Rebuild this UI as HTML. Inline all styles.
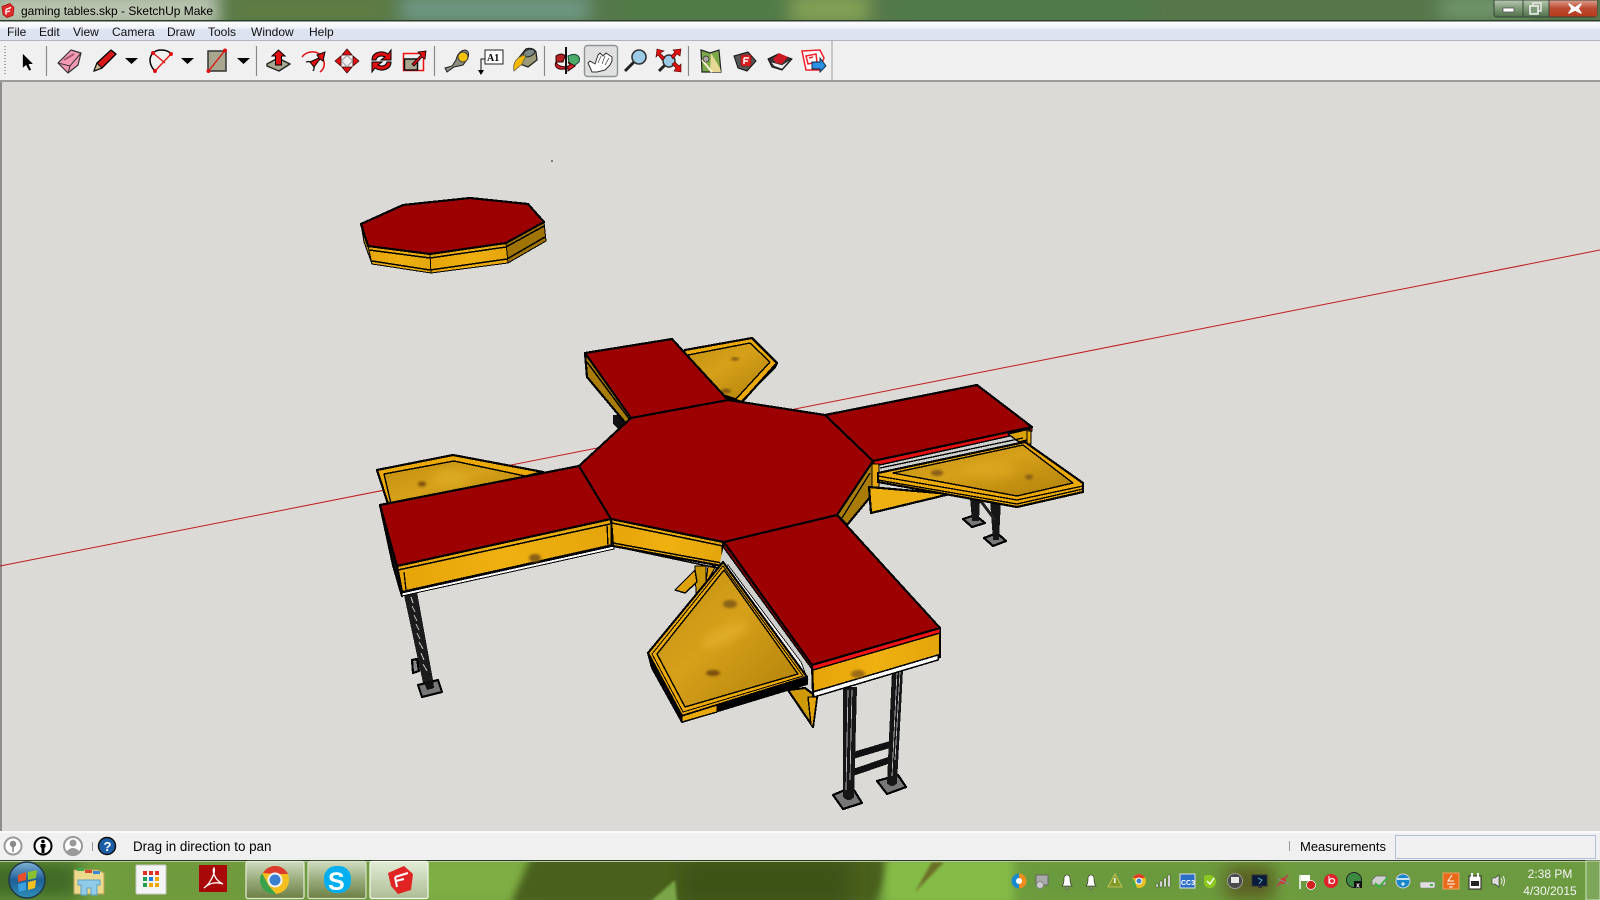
<!DOCTYPE html>
<html><head><meta charset="utf-8"><title>gaming tables.skp - SketchUp Make</title>
<style>
html,body{margin:0;padding:0;width:1600px;height:900px;overflow:hidden;background:#dbdad6}
svg{display:block;position:absolute;left:0;top:0}
text{font-family:"Liberation Sans",sans-serif;fill:#000}
.k{stroke:#000;stroke-width:2.200;stroke-linejoin:round;stroke-linecap:round}
.t{stroke:#000;stroke-width:1.400;stroke-linejoin:round}
.o{stroke:#000;stroke-width:1;stroke-linejoin:round}
.red{fill:#9c0000}
.m text{font-size:12px;fill:#111}
</style></head><body>
<svg width="1600" height="900" viewBox="0 0 1600 900" xmlns="http://www.w3.org/2000/svg">
<defs>
<filter id="b4" x="-50%" y="-50%" width="200%" height="200%"><feGaussianBlur stdDeviation="4"/></filter>
<filter id="b9" x="-50%" y="-100%" width="200%" height="300%"><feGaussianBlur stdDeviation="9"/></filter>
<filter id="b1" x="-50%" y="-50%" width="200%" height="200%"><feGaussianBlur stdDeviation="1.200"/></filter>
<linearGradient id="menu" x1="0" y1="0" x2="0" y2="1"><stop offset="0" stop-color="#fbfcfe"/><stop offset=".32" stop-color="#f3f5fb"/><stop offset=".42" stop-color="#dfe4f2"/><stop offset="1" stop-color="#dde2f1"/></linearGradient>
<linearGradient id="face" x1="0" y1="0" x2="1" y2="0"><stop offset="0" stop-color="#e6a408"/><stop offset=".5" stop-color="#efb010"/><stop offset="1" stop-color="#e3a50a"/></linearGradient>
<linearGradient id="ply" x1="0" y1="0" x2="1" y2="1"><stop offset="0" stop-color="#c08e0e"/><stop offset=".45" stop-color="#d6a01a"/><stop offset="1" stop-color="#b08008"/></linearGradient>
<linearGradient id="btn" x1="0" y1="0" x2="0" y2="1"><stop offset="0" stop-color="#cfdcc0"/><stop offset=".5" stop-color="#9aab7c"/><stop offset="1" stop-color="#6c7f44"/></linearGradient>
<linearGradient id="btn2" x1="0" y1="0" x2="0" y2="1"><stop offset="0" stop-color="#e2ecd6"/><stop offset="1" stop-color="#aebd94"/></linearGradient>
<linearGradient id="close" x1="0" y1="0" x2="0" y2="1"><stop offset="0" stop-color="#d99a8a"/><stop offset=".5" stop-color="#bb4a30"/><stop offset="1" stop-color="#b83a1c"/></linearGradient>
<linearGradient id="winb" x1="0" y1="0" x2="0" y2="1"><stop offset="0" stop-color="#b9c9b0"/><stop offset=".5" stop-color="#7f9a78"/><stop offset="1" stop-color="#4f7048"/></linearGradient>
<linearGradient id="orb" x1="0" y1="0" x2="0" y2="1"><stop offset="0" stop-color="#7fb4d8"/><stop offset=".5" stop-color="#1f5f96"/><stop offset="1" stop-color="#2d8fb8"/></linearGradient>
<clipPath id="title"><rect width="1600" height="20"/></clipPath>
<clipPath id="task"><rect y="860" width="1600" height="40"/></clipPath>
</defs>

<!-- viewport -->
<rect width="1600" height="900" fill="#dbdad6"/>
<rect x="0" y="82" width="2" height="750" fill="#8d8d8d"/>

<!-- title bar -->
<g clip-path="url(#title)">
<rect width="1600" height="20" fill="#56774a"/>
<rect x="-10" y="-10" width="230" height="40" fill="#b9c4b0" filter="url(#b9)"/>
<rect x="230" y="-6" width="160" height="30" fill="#5f7d42" filter="url(#b9)"/>
<rect x="400" y="-4" width="190" height="26" fill="#6f9a88" filter="url(#b9)"/>
<rect x="620" y="-6" width="170" height="30" fill="#4f7c46" filter="url(#b9)"/>
<rect x="790" y="-6" width="80" height="30" fill="#84a255" filter="url(#b9)"/>
<rect x="890" y="-6" width="260" height="30" fill="#4f7c4a" filter="url(#b9)"/>
<rect x="1440" y="0" width="90" height="16" fill="#7da27c" filter="url(#b9)"/>
</g>
<rect y="20" width="1600" height="1.500" fill="#2d3d2a"/>
<!-- app icon -->
<g transform="translate(8,10.500)"><path d="M-6-4L2-7L6-3L5 5L-1 7L-5 4Z" fill="#e02a2a" stroke="#a81414" stroke-width=".8"/><path d="M-2-1L3-3M-2-1V4M-2 1.500L2 .5" stroke="#fff" stroke-width="1.400" fill="none"/></g>
<text x="21" y="15" font-size="12">gaming tables.skp - SketchUp Make</text>
<!-- window buttons -->
<g>
<path d="M1494 0H1597V14Q1597 17 1594 17H1497Q1494 17 1494 14Z" fill="url(#winb)" stroke="#39463a" stroke-width="1"/>
<rect x="1549" y=".5" width="48" height="16" fill="url(#close)"/>
<path d="M1523 0V17M1549 0V17" stroke="#39463a"/>
<rect x="1503" y="8" width="11" height="4" fill="#fff" stroke="#444" stroke-width=".7"/>
<rect x="1533" y="3" width="8" height="8" fill="none" stroke="#e8e8e8" stroke-width="1.500"/>
<rect x="1530" y="6" width="8" height="8" fill="#7f9a78" stroke="#f4f4f4" stroke-width="1.500"/>
<path d="M1569 4L1575 8L1581 4L1578 8.500L1581 13L1575 10L1569 13L1572 8.500Z" fill="#fff" stroke="#fff" stroke-width="1.500" stroke-linejoin="round"/>
</g>

<!-- menu bar -->
<rect y="21.500" width="1600" height="19" fill="url(#menu)"/>
<rect y="40" width="1600" height="1" fill="#b2b4bd"/>
<g class="m">
<text x="7" y="36">File</text><text x="39" y="36">Edit</text><text x="73" y="36">View</text>
<text x="112" y="36">Camera</text><text x="167" y="36">Draw</text><text x="208" y="36">Tools</text>
<text x="251" y="36">Window</text><text x="309" y="36">Help</text>
</g>

<!-- toolbar -->
<rect y="41" width="1600" height="39" fill="#f0f0f0"/>
<rect y="80" width="1600" height="2" fill="#9a9a9a"/>
<path d="M832 41V80" stroke="#aaaaaa" stroke-width="1.200"/>
<path d="M5 46V76" stroke="#a8a8a8" stroke-dasharray="1 2" stroke-width="2"/>
<path d="M46.500 46V76M256.500 46V76M434.500 46V76M544.500 46V76M688.500 46V76" stroke="#8a8a8a" stroke-width="1.200"/>

<!-- select -->
<path d="M22.500 53V68.500L26 65.500L29 71L31.500 70L29 64.500L33.500 64Z" fill="#000" stroke="#fff" stroke-width=".6"/>
<!-- eraser -->
<path d="M58 63L71 50L81 53L78 65L68 73Z" fill="#f49ab4" stroke="#333" stroke-width="1.200" stroke-linejoin="round"/>
<path d="M58 63L70 66L81 53M70 66L68 73" stroke="#333" fill="none"/>
<path d="M64 60L74 54" stroke="#a85a70" stroke-width="2"/>
<!-- pencil -->
<path d="M94 71L97 63L111 50L116 54L102 68Z" fill="#d81818" stroke="#000" stroke-width="1.300" stroke-linejoin="round"/>
<path d="M94 71L97 63L102 68Z" fill="#c8b48a" stroke="#000"/>
<!-- dropdowns -->
<path d="M125 58H138L131.500 64Z M181 58H194L187.500 64Z M237 58H250L243.500 64Z"/>
<!-- arc -->
<path d="M155 71C146 62 150 50 161 50C165 50 169 51 171 54" fill="none" stroke="#000" stroke-width="1.500"/>
<path d="M155 71L171 54M153 53L165 63" stroke="#e01010" stroke-width="1.300"/>
<circle cx="153" cy="53" r="2" fill="#e01010"/><circle cx="171" cy="54" r="2" fill="#e01010"/><circle cx="155" cy="71" r="2" fill="#e01010"/>
<!-- rect -->
<rect x="208" y="51" width="18" height="20" fill="#a9a68f" stroke="#333" stroke-width="1.500"/>
<path d="M208.500 71L225 50.500" stroke="#e01010" stroke-width="1.300"/>
<circle cx="208.500" cy="71" r="2" fill="#e01010"/><circle cx="225" cy="50.500" r="2" fill="#e01010"/>
<!-- push pull -->
<path d="M267 64L278 58L290 64L279 71L267 66Z" fill="#a9a68f" stroke="#222" stroke-width="1.400" stroke-linejoin="round"/>
<path d="M275.500 65V56H272L278.500 50L285 56H281.500V65Z" fill="#e01010" stroke="#000" stroke-width="1"/>
<!-- follow me -->
<path d="M302 57C308 49 322 50 324 62C325 66 323 70 320 72" fill="none" stroke="#e01010" stroke-width="1.500"/>
<path d="M306 62C312 60 316 66 313 71" fill="none" stroke="#222" stroke-width="1.400"/>
<path d="M310 62L319 58L317 55L325 52L323 61L320 59L314 67Z" fill="#e01010" stroke="#000" stroke-width="1"/>
<!-- move -->
<g fill="#e01010" stroke="#300" stroke-width=".8"><path d="M347 49L352 55H342Z"/><path d="M347 73L352 67H342Z"/><path d="M335 61L341 56V66Z"/><path d="M359 61L353 56V66Z"/></g>
<rect x="343" y="57" width="8" height="8" fill="#eee" stroke="#999" transform="rotate(45 347 61)"/>
<!-- rotate -->
<path d="M372 60C372 52 382 50 388 54L391 50V60H381L385 57C381 55 377 56 376 60Z" fill="#e01010" stroke="#000"/>
<path d="M391 62C391 70 381 72 375 68L372 72V62H382L378 65C382 67 386 66 387 62Z" fill="#e01010" stroke="#000"/>
<!-- scale -->
<rect x="403.500" y="53.500" width="20" height="17" fill="none" stroke="#f01010" stroke-width="1.500"/>
<rect x="404.500" y="59" width="13" height="11" fill="#a9a68f" stroke="#111" stroke-width="1.500"/>
<path d="M412 64L421 55L418 52L426 51L425 59L422 57L414 66Z" fill="#e01010" stroke="#000" stroke-width=".8"/>
<!-- tape -->
<path d="M445 68L452 66L456 60Q458 51 465 50Q470 51 468 58L463 65L454 67L447 72Z" fill="#8c8c80" stroke="#222"/>
<circle cx="463" cy="57" r="5" fill="#f2c200" stroke="#444"/>
<!-- text tool -->
<rect x="485" y="50" width="18" height="14" fill="#fff" stroke="#222"/>
<text x="487" y="61" font-size="10" font-weight="700" style="font-family:'Liberation Serif',serif">A1</text>
<path d="M485 59H481V72" fill="none" stroke="#111"/><path d="M478 70H484L481 75Z"/>
<!-- paint -->
<path d="M517 60L526 49Q533 47 536 52L537 60L528 67L520 64Z" fill="#9a9a78" stroke="#222" stroke-width="1.300"/>
<ellipse cx="529" cy="53" rx="6" ry="3.500" fill="#7c8b88" stroke="#222" transform="rotate(-20 529 53)"/>
<path d="M514 71C512 62 518 56 526 55L522 64Z" fill="#f4b800" stroke="#664" stroke-width=".8"/>
<!-- orbit -->
<path d="M568 56C576 52 581 56 579 62L574 66L569 63Z" fill="#4dab6a" stroke="#143" stroke-width="1"/>
<path d="M556 56C560 53 564 54 565 56L563 62L556 62Z" fill="#b52020" stroke="#300"/>
<path d="M556 62C558 67 566 68 570 65L568 62L575 66L568 71V68C560 71 553 68 556 62Z" fill="#d8202a" stroke="#300" stroke-width="1"/>
<path d="M566 47V74" stroke="#111" stroke-width="2"/>
<!-- pan box -->
<rect x="584.500" y="45.500" width="33" height="31" rx="3" fill="#e0e0e0" stroke="#8e9396" stroke-width="1.400"/>
<path d="M592 72L588 63L590 61L595 64L598 55L600 53L603 56L606 53L609 55L612 57L612 61L610 65L605 70L597 72Z" fill="#fff" stroke="#333" stroke-width="1" stroke-linejoin="round"/>
<path d="M601 56L598 63M605 56L602 64M609 58L605 65" stroke="#555" stroke-width=".8"/>
<!-- magnifier -->
<path d="M625 71L634 62" stroke="#222" stroke-width="3"/>
<circle cx="639" cy="57" r="7" fill="#9ccbe8" stroke="#333" stroke-width="1.600"/>
<!-- extents -->
<path d="M659 71L666 64" stroke="#222" stroke-width="3"/>
<circle cx="669" cy="61" r="6" fill="#9ccbe8" stroke="#333" stroke-width="1.500"/>
<g fill="#e01010" stroke="#400" stroke-width=".6"><path d="M657 49L664 51L660 53L665 58L662 60L658 55L656 57Z"/><path d="M681 49L680 56L677 54L673 59L671 56L675 52L673 50Z"/><path d="M681 72L674 71L676 68L672 64L675 62L679 66L681 64Z"/></g>
<!-- map -->
<path d="M701 50L710 53L719 50L721 72L712 72L702 72Z" fill="#7ca84a" stroke="#222" stroke-width="1.200"/>
<path d="M711 53L720 68L721 72L710 72Z" fill="#e6d894"/><path d="M702 60L712 72" stroke="#f4f0d0" stroke-width="2"/>
<circle cx="706" cy="59" r="3" fill="#a8a8a0" stroke="#333" stroke-width=".8"/>
<!-- warehouse -->
<path d="M734 56L748 52L756 61L747 71L738 68Z" fill="#555" stroke="#111"/>
<path d="M741 55L751 55L751 66L741 66Z" fill="#d82020" stroke="#801010" stroke-width=".6"/>
<path d="M744 58H749M744 58V64M744 61H748" stroke="#fff" stroke-width="1.400" fill="none"/>
<!-- extension -->
<path d="M768 59L778 54L792 59L782 70L772 67Z" fill="#333" stroke="#111"/>
<path d="M771 62L782 65L790 60L782 69L774 66Z" fill="#eee" stroke="#333" stroke-width=".5"/>
<path d="M773 59L779 53L788 57L782 64L776 63Z" fill="#cc1822"/>
<!-- share -->
<path d="M802 51L820 50L824 58L819 70L806 70Z" fill="#fff" stroke="#f0202a" stroke-width="1.500"/>
<path d="M806 56L816 54L817 62L808 64ZM809 58L813 57" fill="none" stroke="#f0202a" stroke-width="1.500"/>
<path d="M812 62H820V58L826 66L820 72V69H812Z" fill="#2a90e8" stroke="#123" stroke-width=".9"/>

<!-- axis -->
<path d="M0 566L1600 250" stroke="#c21a1f" stroke-width="1"/>
<circle cx="552" cy="161" r=".8" fill="#111"/>

<g shape-rendering="crispEdges">
<!-- floating octagon -->
<g>
<path d="M361 224L372 264L429 273L508 263L546 241L544 222Z" fill="#000"/>
<path d="M368 246L430 254L431 273L372 264Z" fill="url(#face)" class="o"/>
<path d="M430 254L506 243L508 263L431 273Z" fill="url(#face)" class="o"/>
<path d="M506 243L544 222L546 241L508 263Z" fill="#a07404" class="o"/>
<path d="M361 224L368 246L372 264L364 242Z" fill="#b88806" class="o"/>
<path d="M369 250L430 258L506 247L544 226M372 261L430 270L507 259L545 237" fill="none" stroke="#000" stroke-width="1.500"/>
<path d="M361 224L403 205L470 198L528 204L544 222L506 243L430 254L368 246Z" class="red k"/>
</g>

<!-- left leg -->
<g>
<path d="M412 660L417 659L419 671L413 673Z" fill="#888" class="k"/>
<path d="M404 595L417 592L433 680L423 683Z" fill="#1c1c1c"/>
<path d="M411 597L413 603M412 606L415 612M414 615L417 621M416 624L419 630M417 633L420 639M419 642L423 649M421 653L424 660M423 664L427 671" stroke="#c8c8c8" stroke-width="1"/>
<path d="M418 685L438 680L442 692L422 697Z" fill="#777" class="k"/>
<path d="M424 682L433 680L434 688L427 690Z" fill="#111"/>
</g>

<!-- front legs -->
<g>
<path d="M877 781L898 775L906 787L887 794Z" fill="#777" class="k"/>
<path d="M833 795L852 787L862 803L843 809Z" fill="#777" class="k"/>
<path d="M853 752L890 741V748L853 759ZM853 769L888 757V764L853 776Z" fill="#111"/>
<path d="M843 687L857 687L854 797Q849 803 843 797Z" fill="#161616"/>
<path d="M892 670L903 670L897 783Q892 789 887 783Z" fill="#161616"/>
<path d="M848 690L846 790M852 690L850 780M897 672L892 776M900 672L895 760" stroke="#bbb" stroke-width=".8"/>
</g>

<!-- right legs -->
<g>
<path d="M963 519L975 515L985 523L972 527Z" fill="#777" class="k"/>
<path d="M984 538L997 533L1006 541L993 546Z" fill="#777" class="k"/>
<path d="M970 498H980L979 521H972Z" fill="#161616"/>
<path d="M990 500H1001L999 540H993Z" fill="#161616"/>
<path d="M980 500L995 520" stroke="#222" stroke-width="3"/>
</g>

<!-- center support post -->
<path d="M695 566H706V593H696Z" fill="#c99808" class="o"/>
<path d="M695 570L675 590L685 593L697 582Z" fill="#dea30a" class="t"/>
<path d="M708 566H716L706 583Z" fill="#d89f08" class="o"/>

<!-- left shelf -->
<path d="M377 470L453 455L543 472L390 510Z" fill="#eca90a" class="k"/>
<path d="M384 474L454 461L525 476L392 508Z" fill="url(#ply)" class="t"/>
<path d="M377 470L390 510" stroke="#000" stroke-width="2"/>
<ellipse cx="450" cy="478" rx="18" ry="9" fill="#e0ae28" opacity=".7" filter="url(#b4)"/>
<ellipse cx="422" cy="484" rx="4" ry="2.500" fill="#7c5010" filter="url(#b1)"/>
<!-- top shelf -->
<path d="M685 350L752 338L777 363L742 402L670 380Z" fill="#eca90a" class="k"/>
<path d="M688 355L750 343L770 362L736 399L680 380Z" fill="url(#ply)" class="t"/>
<path d="M777 364L742 402L739 404L775 368Z" fill="#b88806" class="t"/>
<ellipse cx="735" cy="359" rx="4" ry="1.500" fill="#7c5010" filter="url(#b1)"/>
<ellipse cx="726" cy="391" rx="5" ry="2" fill="#7c5010" filter="url(#b1)"/>

<!-- top arm sides -->
<path d="M613 415H624V434L613 424Z" fill="#111"/>
<path d="M585 353L587 377L628 426L631 418Z" fill="#a87c06" class="k"/>
<path d="M587 362L630 420" stroke="#000" stroke-width="1.500"/>

<!-- left arm front -->
<path d="M380 505L397 566L402 596L393 565Z" fill="#111" class="k"/>
<path d="M397 566L611 519L613 545L402 592Z" fill="url(#face)" class="k"/>
<path d="M398 570L610 524" stroke="#000" stroke-width="1.500"/>
<path d="M404 572L406 590M607 524L608 546M611 520V546" stroke="#000" stroke-width="1.300"/>
<path d="M402 593L614 546L614 549L402 596Z" fill="#fff" stroke="#000" stroke-width="1"/>
<ellipse cx="535" cy="558" rx="6" ry="4" fill="#8a5f12" filter="url(#b1)"/>
<!-- octagon front left face -->
<path d="M611 519L723 542L722 566L613 546Z" fill="url(#face)" class="k"/>
<path d="M612 523L723 546M613 543L722 563M613 546L722 569" stroke="#000" stroke-width="1.500" fill="none"/>
<!-- octagon right face -->
<path d="M873 461L837 515L847 525L876 490Z" fill="#a87c06" class="k"/>
<path d="M842 518L870 473" stroke="#000" stroke-width="1.300"/>

<!-- right arm underside + posts -->
<path d="M873 461L1032 427L1030 445L878 490Z" fill="#d0d0ce"/>
<path d="M873 461L1032 427L1032 431L875 466Z" fill="#e01010" class="t"/>
<path d="M1008 434L1019 442L1027 440L1030 429Z" fill="#dba208" class="t"/>
<path d="M872 464H879V490H872Z" fill="#e8a80c" class="t"/>
<path d="M1027 431H1031V444H1027Z" fill="#e8a80c" class="t"/>
<!-- right shelf support panel -->
<path d="M869 487L950 494L871 513Z" fill="#eeb010" class="k"/>
<!-- right shelf -->
<path d="M878 473L1025 442L1083 483L1083 492L1017 507L878 482Z" fill="#eca90a" class="k"/>
<path d="M893 473L1023 445L1073 483L1017 496Z" fill="url(#ply)" class="t"/>
<path d="M878 476L1017 500L1083 486M878 480L1017 504L1083 489" fill="none" stroke="#000" stroke-width="1.300"/>
<path d="M880 468L1023 438" stroke="#000" stroke-width="1.300"/>
<ellipse cx="990" cy="470" rx="26" ry="8" fill="#dfa820" opacity=".7" filter="url(#b4)"/>
<ellipse cx="937" cy="473" rx="6" ry="3" fill="#8a5f12" filter="url(#b1)"/>
<ellipse cx="1029" cy="477" rx="4" ry="2.500" fill="#8a5f12" filter="url(#b1)"/>

<!-- front shelf support -->
<path d="M788 690L805 688L817 697L813 727Z" fill="#cf9a08" class="k"/>
<path d="M808 697L817 697L813 727L811 725Z" fill="#e3a50a" class="t"/>
<!-- gray strip -->
<path d="M724 545L812 665L808 680L720 562Z" fill="#d0d0ce"/>
<path d="M728 565L801 662L808 680L720 572Z" fill="#f2f2f0" stroke="#000" stroke-width=".8"/>
<!-- front shelf -->
<path d="M648 653L652 668L682 722L807 684L807 677L723 562Z" fill="#000" stroke="#000" stroke-width="2" stroke-linejoin="round"/>
<path d="M723 562L648 653L682 716L807 677Z" fill="#eca90a" class="k"/>
<path d="M724 570L657 654L685 707L798 674Z" fill="url(#ply)" class="t"/>
<path d="M723 566L652 654L683 712L803 676Z" fill="none" stroke="#000" stroke-width="1"/>
<path d="M682 716L682 722L717 712L717 705Z" fill="#e8a80c" class="t"/>
<ellipse cx="725" cy="635" rx="25" ry="8" fill="#e6b430" opacity=".6" filter="url(#b4)" transform="rotate(-25 725 635)"/>
<ellipse cx="730" cy="604" rx="7" ry="4" fill="#8a6412" filter="url(#b1)"/>
<ellipse cx="713" cy="673" rx="7" ry="3" fill="#7c5010" filter="url(#b1)"/>

<!-- front arm face -->
<path d="M812 665L940 628L940 657L813 692Z" fill="url(#face)" class="k"/>
<path d="M812 665L940 628L940 633L813 670Z" fill="#ee1414" class="t"/>
<path d="M813 692L938 655L938 660L814 697Z" fill="#fff" stroke="#000" stroke-width="1.500"/>
<path d="M812 665L813 697" stroke="#000" stroke-width="2"/>
<ellipse cx="858" cy="674" rx="7" ry="4" fill="#9c6c14" filter="url(#b1)"/>
<!-- front arm side -->
<path d="M724 542L812 665L812 669L724 548Z" fill="#800000" class="t"/>

<!-- table tops -->
<path d="M585 353L672 339L728 400L631 418Z" class="red k"/>
<path d="M380 505L579 466L611 519L397 566Z" class="red k"/>
<path d="M825 415L977 385L1032 427L873 461Z" class="red k"/>
<path d="M724 542L837 515L940 628L812 665Z" class="red k"/>
<path d="M579 466L631 418L728 400L825 415L873 461L837 515L724 542L611 519Z" class="red k"/>
</g>

<!-- status bar -->
<rect y="832" width="1600" height="28" fill="#f0f0f0"/>
<rect y="831" width="1600" height="2" fill="#fafafa"/>
<circle cx="13" cy="846" r="8.500" fill="#fff" stroke="#9a9a9a" stroke-width="2"/>
<circle cx="13" cy="844" r="3.200" fill="#8a8a8a"/><path d="M13 846V852" stroke="#8a8a8a" stroke-width="1.600"/>
<circle cx="43" cy="846" r="8.500" fill="#fff" stroke="#000" stroke-width="2"/>
<circle cx="43" cy="841.500" r="1.800"/><path d="M40.500 844H45.500V847L44.500 848V853H41.500V848L40.500 847Z"/>
<circle cx="73" cy="846" r="9" fill="#fff" stroke="#999" stroke-width="2"/>
<circle cx="73" cy="843" r="3.500" fill="#999"/><path d="M66 852Q73 844 80 852Q73 857 66 852Z" fill="#999"/>
<path d="M92.500 842V851" stroke="#999"/>
<circle cx="107" cy="846" r="8.500" fill="#1a5ea5" stroke="#111" stroke-width="1.500"/>
<text x="103.500" y="851" font-size="13" font-weight="700" style="fill:#fff">?</text>
<text x="133" y="851" font-size="13.400">Drag in direction to pan</text>
<path d="M1289.500 841V851" stroke="#999"/>
<text x="1300" y="851" font-size="13">Measurements</text>
<rect x="1395.500" y="835.500" width="200" height="23" fill="#f0f0f0" stroke="#b0c0d8"/>

<!-- taskbar -->
<g clip-path="url(#task)">
<rect y="860" width="1600" height="40" fill="#6f9f3e"/>
<rect x="-20" y="860" width="100" height="40" fill="#3f6a28" filter="url(#b9)"/>
<rect x="120" y="855" width="260" height="50" fill="#6f9a3e" filter="url(#b9)"/>
<rect x="380" y="855" width="150" height="50" fill="#7fae45" filter="url(#b9)"/>
<path d="M532 855H895L875 905H510Z" fill="#48601f" filter="url(#b4)"/>
<rect x="680" y="860" width="170" height="45" fill="#3c5212" filter="url(#b9)"/>
<path d="M650 902L675 880L677 902Z" fill="#7aa648" filter="url(#b1)"/>
<rect x="885" y="858" width="130" height="45" fill="#85bb46" filter="url(#b4)"/>
<path d="M915 892L932 862H944Z" fill="#6c6e28" filter="url(#b1)"/>
<rect x="1020" y="860" width="200" height="40" fill="#6a9a3e" filter="url(#b9)"/>
<rect x="1225" y="865" width="50" height="35" fill="#5a5f20" filter="url(#b9)"/>
<rect x="1290" y="855" width="300" height="50" fill="#6c9a3f" filter="url(#b9)"/>
<rect y="860" width="1600" height="1" fill="#26381e"/>
<rect y="861" width="1600" height="1" fill="#b8c8a0"/>
</g>
<!-- start orb -->
<circle cx="27" cy="880" r="18" fill="url(#orb)" stroke="#22384a" stroke-width="1.500"/>
<path d="M18 875L26 872L26 880L18 882Z" fill="#e8502a"/>
<path d="M28 872L37 870L36 878L28 880Z" fill="#88c030"/>
<path d="M18 884L26 882L26 890L19 892Z" fill="#3aa0e0"/>
<path d="M28 882L36 880L35 888L28 890Z" fill="#f4c020"/>
<!-- explorer -->
<path d="M74 870H98L104 873V894H74Z" fill="#ecd98c" stroke="#b8a060"/>
<path d="M77 868H84V871H77Z" fill="#40a848"/><path d="M85 870H92V873H85Z" fill="#d84830"/><path d="M93 871H100V874H93Z" fill="#3888d8"/>
<path d="M78 880H100V885H97V895H91V888H87V895H81V885H78Z" fill="#90cce8" stroke="#5fa0c8"/>
<!-- apps -->
<rect x="136" y="865" width="30" height="29" rx="1" fill="#f4f4f4" stroke="#c8c8c8"/>
<g><rect x="143" y="871" width="4" height="4" fill="#e03020"/><rect x="149" y="871" width="4" height="4" fill="#e03020"/><rect x="155" y="871" width="4" height="4" fill="#e03020"/><rect x="143" y="877" width="4" height="4" fill="#20a050"/><rect x="149" y="877" width="4" height="4" fill="#2080e0"/><rect x="155" y="877" width="4" height="4" fill="#f4a800"/><rect x="143" y="883" width="4" height="4" fill="#20a050"/><rect x="149" y="883" width="4" height="4" fill="#f4a800"/><rect x="155" y="883" width="4" height="4" fill="#f4a800"/></g>
<!-- pdf -->
<rect x="199" y="865" width="28" height="27" fill="#a80808"/>
<path d="M204 888C210 884 216 872 214 868C212 870 214 880 223 884C218 882 210 882 204 888Z" fill="none" stroke="#fff" stroke-width="1.300"/>
<!-- task buttons -->
<rect x="246" y="861.500" width="58" height="37" rx="2" fill="url(#btn)" stroke="#e4ecd8" stroke-width="1.200"/>
<rect x="308" y="861.500" width="58" height="37" rx="2" fill="url(#btn)" stroke="#d8e2c8" stroke-width="1.200"/>
<rect x="370" y="861.500" width="58" height="37" rx="2" fill="url(#btn2)" stroke="#f4f8ee" stroke-width="1.200"/>
<!-- chrome -->
<circle cx="275" cy="880" r="14" fill="#f4c020"/>
<path d="M275 866A14 14 0 0 1 288 874H275L263 873A14 14 0 0 1 275 866Z" fill="#dc3a2a"/>
<path d="M262 873L269 886L276 894A14 14 0 0 1 262 873Z" fill="#3aa24a"/>
<circle cx="275" cy="880" r="6.500" fill="#3a7fd0" stroke="#f4f4f4" stroke-width="2"/>
<!-- skype -->
<rect x="324" y="866" width="27" height="27" rx="12" fill="#00aff0"/>
<text x="328" y="890" font-size="25" font-weight="700" style="fill:#fff">S</text>
<!-- sketchup -->
<path d="M388 873L404 866L413 874L411 890L398 894L391 886Z" fill="#e02424"/>
<path d="M395 877L408 873M395 877L397 887M396 881L404 879" stroke="#fff" stroke-width="2" fill="none"/>

<!-- tray -->
<g>
<circle cx="1019" cy="881" r="7.500" fill="#f08c20"/><path d="M1019 873.500A7.500 7.500 0 0 0 1019 888.500Z" fill="#1a8ad0"/><circle cx="1019" cy="881" r="3" fill="#fff"/>
<rect x="1036" y="875" width="12" height="10" fill="#aaa" stroke="#666"/><circle cx="1040" cy="885" r="3.500" fill="#ccc" stroke="#888"/>
<path d="M1062 886Q1064 884 1064 879Q1064 875 1067 875Q1070 875 1070 879Q1070 884 1072 886ZM1066 887H1068V889H1066Z" fill="#fff" stroke="#222" stroke-width=".6"/>
<path d="M1086 886Q1088 884 1088 879Q1088 875 1091 875Q1094 875 1094 879Q1094 884 1096 886ZM1090 887H1092V889H1090Z" fill="#fff" stroke="#222" stroke-width=".6"/>
<path d="M1115 874L1122 887H1108Z" fill="#7f9a28" stroke="#d4c860" stroke-width=".8"/><rect x="1114" y="878" width="1.500" height="5" fill="#fff"/>
<circle cx="1139" cy="881" r="7" fill="#e6c020"/><path d="M1139 874A7 7 0 0 1 1145 878H1139L1133 878A7 7 0 0 1 1139 874Z" fill="#dc3a2a"/><path d="M1133 878L1137 888A7 7 0 0 1 1133 878Z" fill="#3aa24a"/><circle cx="1139" cy="881" r="3" fill="#3a7fd0" stroke="#fff"/>
<path d="M1156 884h2v3h-2zM1160 881h2v6h-2zM1164 878h2v9h-2zM1168 875h2v12h-2z" fill="#fff" stroke="#222" stroke-width=".4"/>
<rect x="1180" y="874" width="15" height="14" fill="#2a6ec8" stroke="#dde" /><text x="1181" y="885" font-size="7" font-weight="700" style="fill:#fff">CC3</text>
<path d="M1204 876Q1210 873 1215 878Q1218 884 1212 888Q1206 889 1204 884Z" fill="#8cc820"/><path d="M1207 881L1210 884L1214 878" stroke="#fff" fill="none" stroke-width="1.400"/>
<circle cx="1235" cy="881" r="7.500" fill="#4a4a4a" stroke="#999"/><rect x="1231" y="877" width="8" height="6" fill="#e8e8e8"/>
<rect x="1252" y="875" width="15" height="11" fill="#0a1a3a" stroke="#333"/><path d="M1258 878L1262 880L1259 884" stroke="#5ac" fill="none"/><rect x="1258" y="886" width="4" height="2" fill="#333"/>
<path d="M1277 886L1288 875" stroke="#a85050" stroke-width="2"/><circle cx="1283" cy="881" r="3" fill="#d83030"/><path d="M1278 879L1289 884" stroke="#888" stroke-width="1.500"/>
<path d="M1300 875V889" stroke="#fff" stroke-width="1.500"/><path d="M1301 875H1310V881H1301Z" fill="#fff"/><circle cx="1311" cy="885" r="4.500" fill="#d02020" stroke="#fff" stroke-width=".7"/>
<circle cx="1331" cy="881" r="7" fill="#e0202a"/><circle cx="1332" cy="881" r="2.500" fill="none" stroke="#fff" stroke-width="1.200"/><path d="M1329 876V884" stroke="#fff"/>
<circle cx="1354" cy="880" r="7.500" fill="#3a8a40" stroke="#222"/><rect x="1354" y="881" width="8" height="7" fill="#111"/><text x="1356" y="887.500" font-size="7" font-weight="700" style="fill:#fff">x</text>
<path d="M1372 880L1376 876H1386V885H1372Z" fill="#cfcfcf" stroke="#666" stroke-width=".7"/><path d="M1375 883L1379 887L1388 877" stroke="#40b040" fill="none" stroke-width="2"/>
<circle cx="1403" cy="881" r="7" fill="#1a88c8" stroke="#ccd"/><path d="M1397 879H1409" stroke="#fff" stroke-width="1.500"/><path d="M1403 882V886M1401 884H1405" stroke="#fff"/>
<rect x="1420" y="882" width="15" height="6" rx="1.500" fill="#ddd" stroke="#888" stroke-width=".6"/><rect x="1430" y="884" width="3" height="2" fill="#4a4"/>
<rect x="1443" y="873" width="16" height="16" fill="#e86a1a" stroke="#f4a060"/><path d="M1452 875L1448 881H1454M1447 884H1455M1449 887H1453" stroke="#fff" fill="none"/>
<path d="M1469 876H1481V889H1469Z" fill="#fff" stroke="#222"/><path d="M1472 873V878M1478 873V878" stroke="#fff" stroke-width="2"/><rect x="1471" y="881" width="8" height="5" fill="#222"/>
<path d="M1492 878H1495L1499 875V887L1495 884H1492Z" fill="#ddd" stroke="#333" stroke-width=".6"/><path d="M1501 878Q1503 881 1501 884M1503 876Q1506 881 1503 886" stroke="#eee" fill="none"/>
</g>
<text x="1550" y="878" font-size="12" text-anchor="middle" style="fill:#f4f4f4">2:38 PM</text>
<text x="1550" y="895" font-size="12" text-anchor="middle" style="fill:#f4f4f4">4/30/2015</text>
<rect x="1586" y="861" width="14" height="39" fill="#7da65a" stroke="#cfe0b8" stroke-width="1"/>
</svg>
</body></html>
